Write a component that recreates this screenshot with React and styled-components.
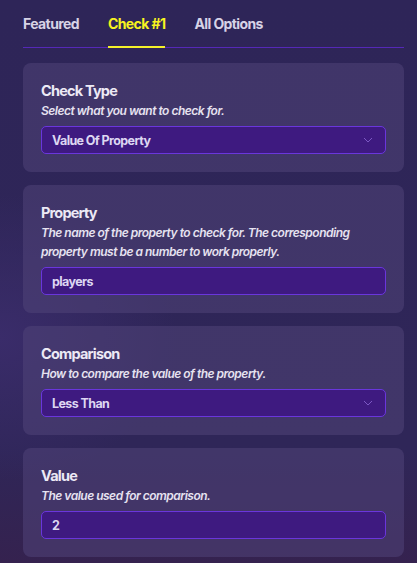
import React from "react";
import styled, { createGlobalStyle } from "styled-components";

const Global = createGlobalStyle`
  html, body { margin: 0; padding: 0; }
  body {
    width: 417px; height: 563px; overflow: hidden;
    background: #2e2558;
    font-family: Inter, "Noto Sans", sans-serif;
  }
`;

const Page = styled.div`
  width: 417px;
  height: 563px;
  box-sizing: border-box;
  padding: 0 13px 0 23px;
  background: radial-gradient(ellipse at 0% 60%, #3a2c6a 0%, rgba(46,37,88,0) 30%),
    linear-gradient(180deg, #2e2558 0%, #2f2658 80%, #35224f 100%);
  overflow: hidden;
`;

const Tabs = styled.div`
  display: flex;
  gap: 29px;
  height: 47px;
  box-sizing: content-box;
  border-bottom: 1px solid #5528b8;
  margin-bottom: 15px;
`;

const Tab = styled.div`
  display: flex;
  align-items: center;
  height: 47px;
  box-sizing: border-box;
  font-size: 14px;
  font-weight: 700;
  letter-spacing: -0.6px;
  color: ${(p) => (p.$active ? "#f7f31f" : "#d7d3e6")};
  position: relative;
  &::after {
    content: "";
    position: absolute;
    left: 0;
    right: 0;
    bottom: -1px;
    height: 2px;
    background: ${(p) => (p.$active ? "#f4f12a" : "transparent")};
  }
`;

const Cards = styled.div`
  display: flex;
  flex-direction: column;
  gap: 13px;
`;

const Card = styled.div`
  background: rgba(80, 68, 120, 0.55);
  border-radius: 8px;
  padding: 18px;
  display: flex;
  flex-direction: column;
`;

const Title = styled.div`
  font-size: 14.5px;
  font-weight: 700;
  letter-spacing: -0.8px;
  line-height: 20px;
  color: #ece9f5;
`;

const Desc = styled.div`
  font-size: 12px;
  font-style: italic;
  font-weight: 600;
  letter-spacing: -0.5px;
  line-height: 19px;
  color: #e6e2f0;
  margin-bottom: 6px;
`;

const Field = styled.div`
  height: 28px;
  box-sizing: border-box;
  border: 1px solid #6a36dc;
  border-radius: 5px;
  background: #3e1a80;
  display: flex;
  align-items: center;
  justify-content: space-between;
  padding: 0 12px 0 10px;
  font-size: 12.5px;
  font-weight: 700;
  letter-spacing: -0.6px;
  color: #ddd6f2;
`;

const Chevron = () => (
  <svg width="10" height="6" viewBox="0 0 10 6" fill="none">
    <path d="M1 1 L5 5 L9 1" stroke="#7c58c4" strokeWidth="1" />
  </svg>
);

const sections = [
  { title: "Check Type", desc: ["Select what you want to check for."], value: "Value Of Property", select: true },
  {
    title: "Property",
    desc: ["The name of the property to check for. The corresponding", "property must be a number to work properly."],
    value: "players",
  },
  { title: "Comparison", desc: ["How to compare the value of the property."], value: "Less Than", select: true },
  { title: "Value", desc: ["The value used for comparison."], value: "2" },
];

export default function App() {
  return (
    <>
      <Global />
      <Page>
        <Tabs>
          <Tab>Featured</Tab>
          <Tab $active>Check #1</Tab>
          <Tab>All Options</Tab>
        </Tabs>
        <Cards>
          {sections.map((s) => (
            <Card key={s.title}>
              <Title>{s.title}</Title>
              <Desc>
                {s.desc.map((d, i) => (
                  <div key={i}>{d}</div>
                ))}
              </Desc>
              <Field>
                <span>{s.value}</span>
                {s.select && <Chevron />}
              </Field>
            </Card>
          ))}
        </Cards>
      </Page>
    </>
  );
}
